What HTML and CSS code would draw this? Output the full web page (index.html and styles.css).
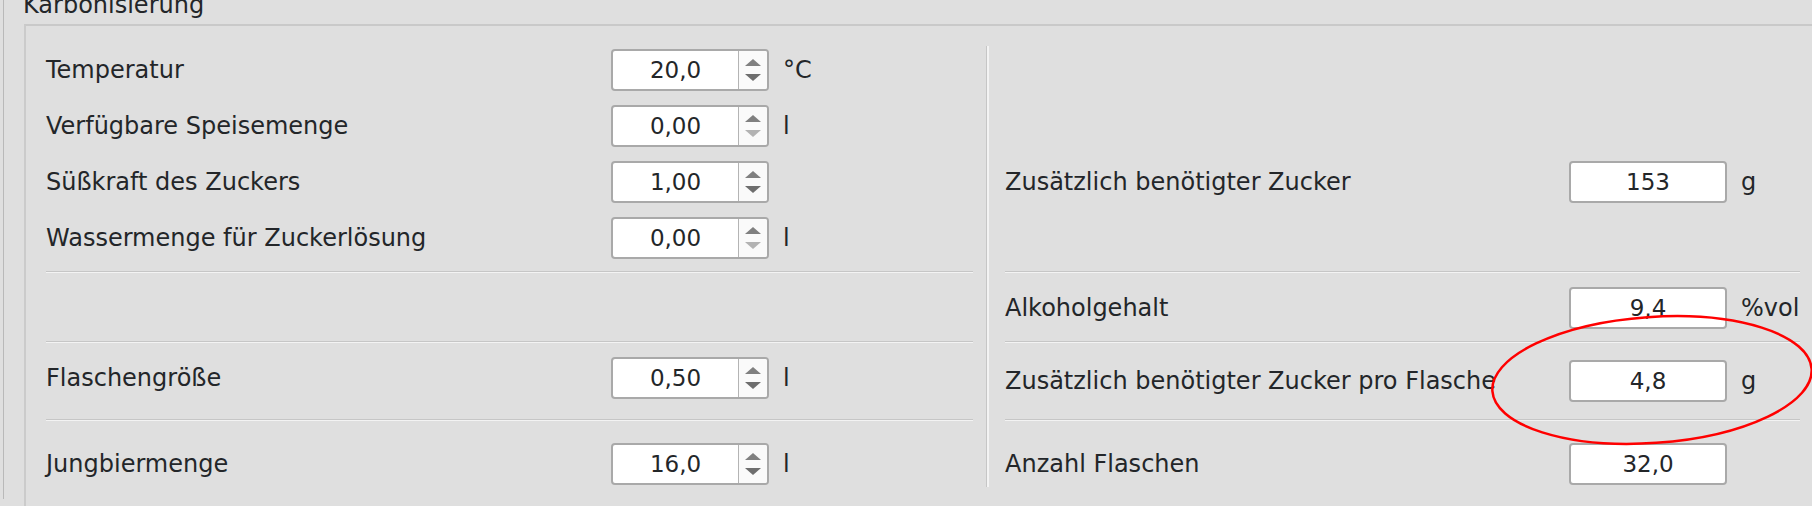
FILE: index.html
```html
<!DOCTYPE html>
<html lang="de">
<head>
<meta charset="utf-8">
<title>Karbonisierung</title>
<link rel="stylesheet" href="styles.css">
</head>
<body>
<div class="page">
  <div class="outer">
    <div class="title">Karbonisierung</div>
    <div class="frame">
      <div class="content">
        <div class="col left">
          <div class="block-top">
            <div class="row">
              <span class="label">Temperatur</span>
              <div class="spin"><span class="val">20,0</span><span class="btn"><svg width="28" height="38" viewBox="0 0 28 38"><polygon class="up" points="6,15 22,15 14,8"/><polygon class="dn" points="6,23 22,23 14,30"/></svg></span></div>
              <span class="unit">°C</span>
            </div>
            <div class="row">
              <span class="label">Verfügbare Speisemenge</span>
              <div class="spin"><span class="val">0,00</span><span class="btn"><svg width="28" height="38" viewBox="0 0 28 38"><polygon class="up" points="6,15 22,15 14,8"/><polygon class="dn off" points="6,23 22,23 14,30"/></svg></span></div>
              <span class="unit">l</span>
            </div>
            <div class="row">
              <span class="label">Süßkraft des Zuckers</span>
              <div class="spin"><span class="val">1,00</span><span class="btn"><svg width="28" height="38" viewBox="0 0 28 38"><polygon class="up" points="6,15 22,15 14,8"/><polygon class="dn" points="6,23 22,23 14,30"/></svg></span></div>
              <span class="unit"></span>
            </div>
            <div class="row">
              <span class="label">Wassermenge für Zuckerlösung</span>
              <div class="spin"><span class="val">0,00</span><span class="btn"><svg width="28" height="38" viewBox="0 0 28 38"><polygon class="up" points="6,15 22,15 14,8"/><polygon class="dn off" points="6,23 22,23 14,30"/></svg></span></div>
              <span class="unit">l</span>
            </div>
          </div>
          <div class="sep"></div>
          <div class="empty"></div>
          <div class="sep"></div>
          <div class="row pad-a">
            <span class="label">Flaschengröße</span>
            <div class="spin"><span class="val">0,50</span><span class="btn"><svg width="28" height="38" viewBox="0 0 28 38"><polygon class="up" points="6,15 22,15 14,8"/><polygon class="dn" points="6,23 22,23 14,30"/></svg></span></div>
            <span class="unit">l</span>
          </div>
          <div class="sep"></div>
          <div class="row pad-last">
            <span class="label">Jungbiermenge</span>
            <div class="spin"><span class="val">16,0</span><span class="btn"><svg width="28" height="38" viewBox="0 0 28 38"><polygon class="up" points="6,15 22,15 14,8"/><polygon class="dn" points="6,23 22,23 14,30"/></svg></span></div>
            <span class="unit">l</span>
          </div>
        </div>
        <div class="vline"></div>
        <div class="col right">
          <div class="block-right">
            <div class="row">
              <span class="label">Zusätzlich benötigter Zucker</span>
              <div class="out">153</div>
              <span class="unit">g</span>
            </div>
          </div>
          <div class="sep"></div>
          <div class="row pad-b">
            <span class="label">Alkoholgehalt</span>
            <div class="out">9,4</div>
            <span class="unit">%vol</span>
          </div>
          <div class="sep"></div>
          <div class="row pad-c">
            <span class="label">Zusätzlich benötigter Zucker pro Flasche</span>
            <div class="out">4,8</div>
            <span class="unit">g</span>
          </div>
          <div class="sep"></div>
          <div class="row pad-last">
            <span class="label">Anzahl Flaschen</span>
            <div class="out">32,0</div>
            <span class="unit"></span>
          </div>
        </div>
      </div>
    </div>
  </div>
  <svg class="annot" width="1812" height="506" viewBox="0 0 1812 506">
    <ellipse cx="1652" cy="380" rx="160" ry="63" transform="rotate(-4 1652 380)" fill="none" stroke="#f00" stroke-width="2.5"/>
  </svg>
</div>
</body>
</html>
```

FILE: styles.css
```css
html, body {
  margin: 0;
  padding: 0;
  background: #dfdfdf;
}

body {
  width: 1812px;
  height: 506px;
  overflow: hidden;
  font-family: "DejaVu Sans", "Noto Sans", sans-serif;
  font-size: 24px;
  color: #232629;
}

.page {
  position: relative;
  width: 1812px;
  height: 506px;
  overflow: hidden;
}

.outer {
  margin-left: 3px;
  border-left: 1px solid #b9b9b9;
  height: 506px;
}

.title {
  height: 24px;
  line-height: 24px;
  margin: -7px 0 7px 19px;
  white-space: nowrap;
}

.frame {
  margin-left: 20px;
  border-top: 2px solid #c9c9c9;
  border-left: 2px solid #cbcbcb;
  height: 480px;
}

.content {
  display: flex;
  padding: 20px 0 0 20px;
}

.col {
  display: flex;
  flex-direction: column;
}

.left {
  width: 927px;
}

.right {
  width: 795px;
}

.vline {
  width: 3px;
  height: 441px;
  margin: 0 16px 0 13px;
  background: linear-gradient(to right, #c6c6c6 1px, #f3f3f3 1px);
}

.block-top {
  display: flex;
  flex-direction: column;
  gap: 14px;
  padding: 3px 0 12px;
}

.block-right {
  height: 225px;
  padding-top: 115px;
  box-sizing: border-box;
}

.row {
  display: grid;
  grid-template-columns: 565px 158px auto;
  align-items: center;
  height: 42px;
  box-sizing: content-box;
}

.right .row {
  grid-template-columns: 564px 158px auto;
}

.unit {
  padding-left: 14px;
}

.pad-a {
  padding: 14px 0 20px;
}

.pad-b {
  padding: 14px 0 12px;
}

.pad-c {
  padding: 17px 0 17px;
}

.pad-last {
  padding: 22px 0 2px;
}

.sep {
  height: 0;
  border-top: 1px solid #c6c6c6;
  border-bottom: 1px solid #f3f3f3;
}

.empty {
  height: 68px;
}

.label,
.unit {
  white-space: nowrap;
  line-height: 42px;
}

.spin,
.out {
  box-sizing: border-box;
  width: 158px;
  height: 42px;
  border: 2px solid #a9a9a9;
  border-radius: 4px;
  background: #fff;
}

.spin {
  display: flex;
}

.val,
.out {
  font-size: 23px;
  line-height: 38px;
  text-align: center;
}

.val {
  flex: 1;
}

.btn {
  width: 28px;
  border-left: 1px solid #b4b4b4;
  background: #fafafa;
  border-radius: 0 2px 2px 0;
  display: flex;
}

.btn svg {
  display: block;
}

.up {
  fill: #808080;
}

.dn {
  fill: #6e6e6e;
}

.dn.off {
  fill: #b3b3b3;
}

.annot {
  position: absolute;
  left: 0;
  top: 0;
  pointer-events: none;
}
```
